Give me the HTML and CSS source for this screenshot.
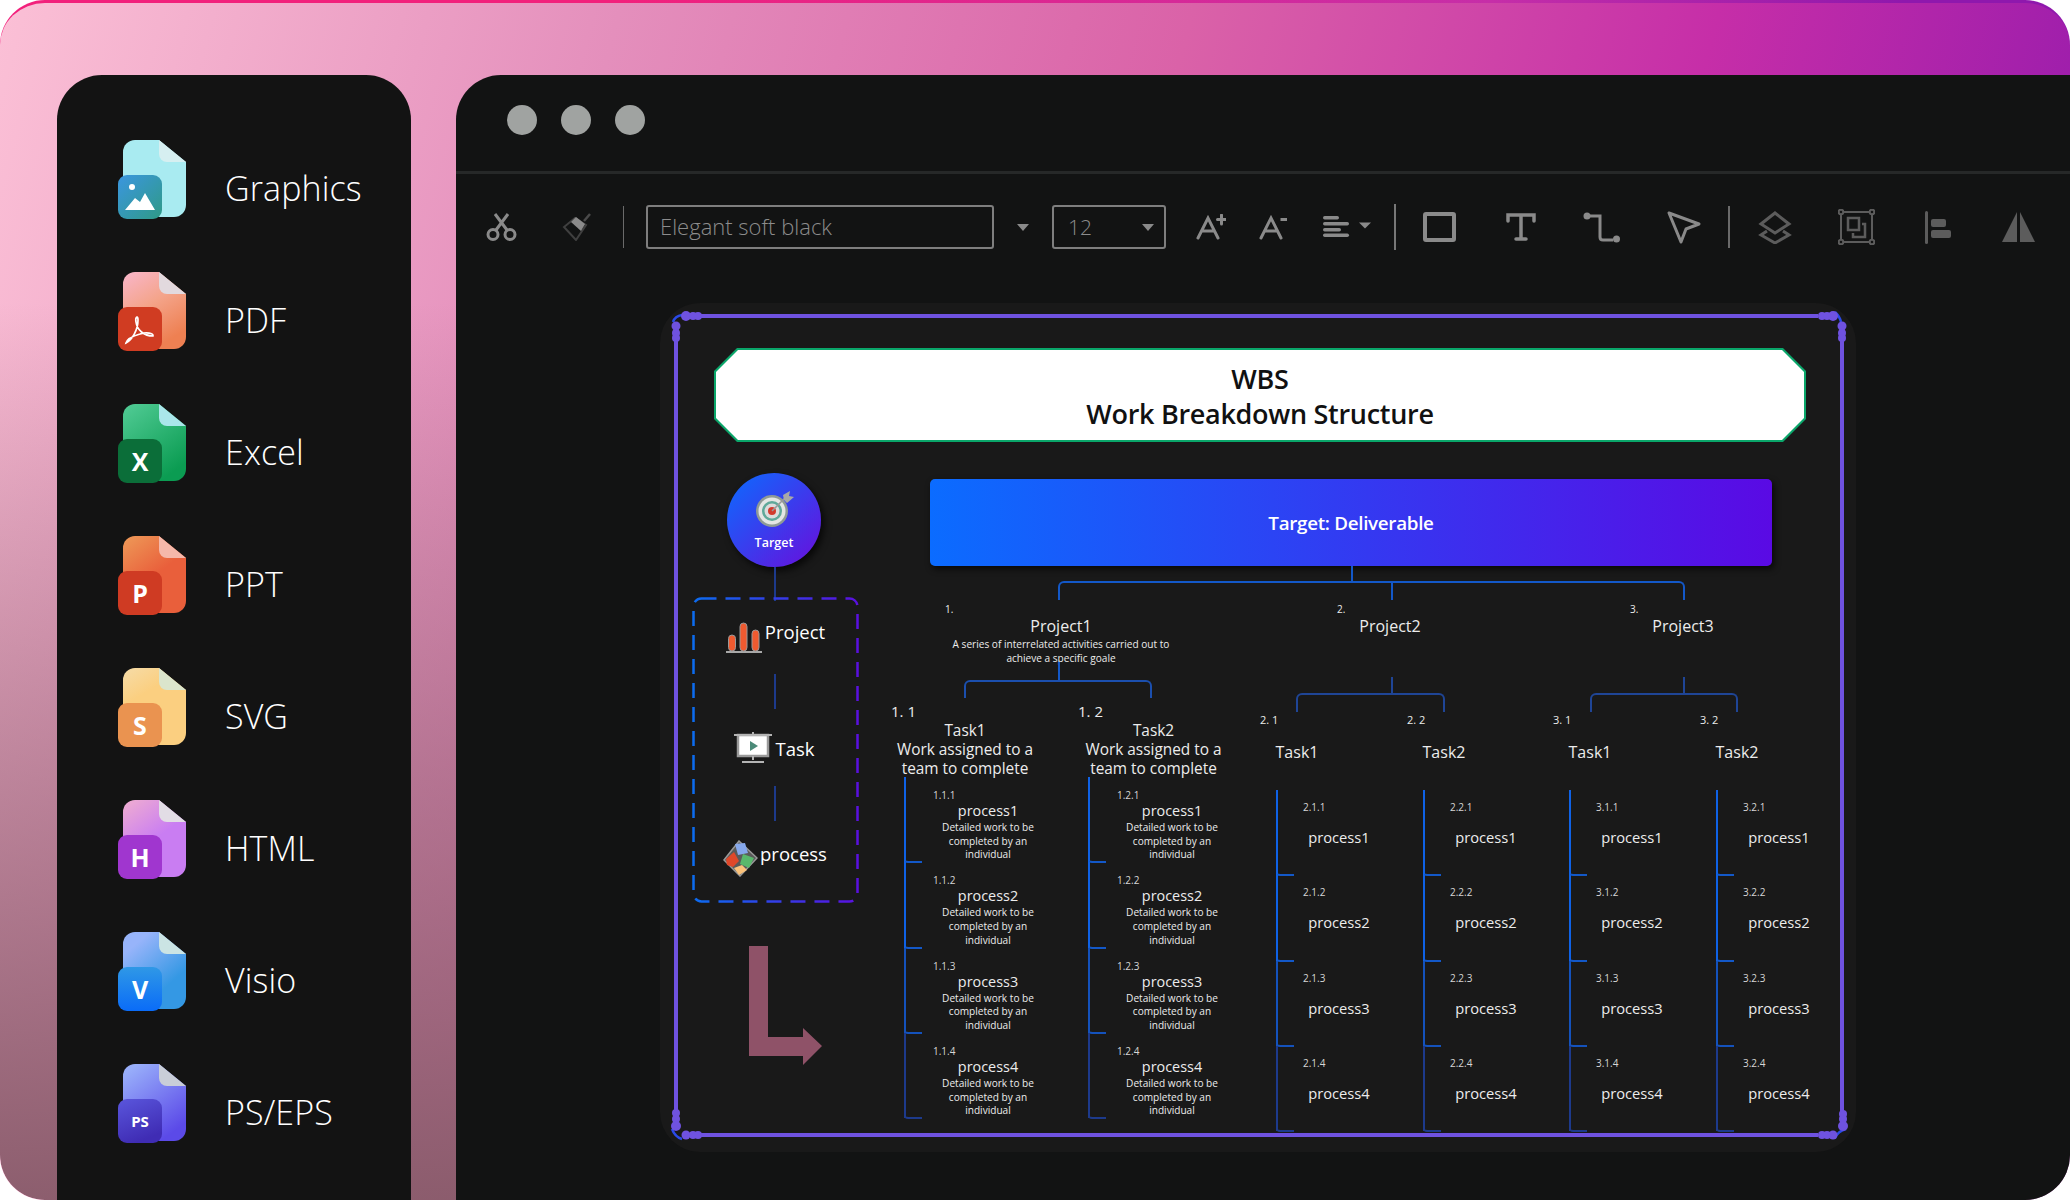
FILE: index.html
```html
<!DOCTYPE html>
<html lang="en">
<head>
    <meta charset="UTF-8">
    <title>Export formats</title>
    <link rel="stylesheet" href="styles.css">
</head>
<body>
    <!-- shared shapes for the file icons -->
    <svg class="defs" width="0" height="0">
        <defs>
            <path id="doc" d="M17 0H41L68 22V65A12 12 0 0 1 56 77H5V12A12 12 0 0 1 17 0Z"/>
            <path id="fold" d="M41 0L68 22H49A8 8 0 0 1 41 14Z"/>
            <linearGradient id="gGraphics" x1="0" y1="0" x2="1" y2="1"><stop offset="0" stop-color="#3b96e0"/><stop offset="1" stop-color="#2f9a86"/></linearGradient>
            <linearGradient id="bPdf" x1="0" y1="0" x2="0.5" y2="1"><stop offset="0" stop-color="#f9b6cb"/><stop offset="0.5" stop-color="#f4a48a"/><stop offset="1" stop-color="#ee8052"/></linearGradient>
            <linearGradient id="bExcel" x1="0" y1="0" x2="0.6" y2="1"><stop offset="0" stop-color="#52cc96"/><stop offset="1" stop-color="#0b9c52"/></linearGradient>
            <linearGradient id="bPpt" x1="0" y1="0" x2="0.6" y2="1"><stop offset="0" stop-color="#ee9a58"/><stop offset="0.6" stop-color="#e95f3b"/></linearGradient>
            <linearGradient id="bSvg" x1="0" y1="0" x2="0.5" y2="1"><stop offset="0" stop-color="#f6dca8"/><stop offset="0.4" stop-color="#fbcf80"/></linearGradient>
            <linearGradient id="bHtml" x1="0" y1="0" x2="0.6" y2="1"><stop offset="0" stop-color="#f0aed0"/><stop offset="0.6" stop-color="#c97df2"/></linearGradient>
            <linearGradient id="bVisio" x1="0" y1="0" x2="0.7" y2="1"><stop offset="0.2" stop-color="#97b4fa"/><stop offset="0.8" stop-color="#3498e4"/></linearGradient>
            <linearGradient id="bPs" x1="0" y1="0" x2="0.6" y2="1"><stop offset="0.1" stop-color="#98aefa"/><stop offset="1" stop-color="#5b4ae8"/></linearGradient>
            <linearGradient id="fVisio" x1="0" y1="0" x2="0" y2="1"><stop offset="0" stop-color="#2f98e6"/><stop offset="1" stop-color="#0a6cf8"/></linearGradient>
            <linearGradient id="fPs" x1="0" y1="0" x2="0.4" y2="1"><stop offset="0" stop-color="#5a56dc"/><stop offset="1" stop-color="#3f2cb4"/></linearGradient>
            <linearGradient id="dash" x1="0" y1="0" x2="1" y2="0"><stop offset="0" stop-color="#0c6cf0"/><stop offset="1" stop-color="#5a10e0"/></linearGradient>
        </defs>
    </svg>

    <div class="frame">
        <aside class="sidebar">
            <div class="file-item">
                <svg class="file-icon" viewBox="0 0 68 79"><use href="#doc" fill="#a9ebf1"/><use href="#fold" fill="#d6eff1"/><rect y="35" width="44" height="44" rx="9" fill="url(#gGraphics)"/><circle cx="14" cy="47" r="3" fill="#fff"/><path d="M7 70L17 58L22 62L27 53L37 70Z" fill="#fff"/></svg>
                <span class="file-label">Graphics</span>
            </div>
            <div class="file-item">
                <svg class="file-icon" viewBox="0 0 68 79"><use href="#doc" fill="url(#bPdf)"/><use href="#fold" fill="#e2d9de"/><rect y="35" width="44" height="44" rx="9" fill="#d03c22"/><path d="M8 71C14 68 20 58 20 48C20 43 17 45 18 50C19 58 26 64 35 64C36 61 28 60 22 62C15 64 9 67 8 71Z" fill="none" stroke="#fff" stroke-width="1.7"/></svg>
                <span class="file-label">PDF</span>
            </div>
            <div class="file-item">
                <svg class="file-icon" viewBox="0 0 68 79"><use href="#doc" fill="url(#bExcel)"/><use href="#fold" fill="#aae6ea"/><rect y="35" width="44" height="44" rx="9" fill="#0b6e39"/><text class="icon-letter" x="22" y="67">X</text></svg>
                <span class="file-label">Excel</span>
            </div>
            <div class="file-item">
                <svg class="file-icon" viewBox="0 0 68 79"><use href="#doc" fill="url(#bPpt)"/><use href="#fold" fill="#f5b8aa"/><rect y="35" width="44" height="44" rx="9" fill="#cf3b23"/><text class="icon-letter" x="22" y="67">P</text></svg>
                <span class="file-label">PPT</span>
            </div>
            <div class="file-item">
                <svg class="file-icon" viewBox="0 0 68 79"><use href="#doc" fill="url(#bSvg)"/><use href="#fold" fill="#dbe5cc"/><rect y="35" width="44" height="44" rx="9" fill="#ea9350"/><text class="icon-letter" x="22" y="67">S</text></svg>
                <span class="file-label">SVG</span>
            </div>
            <div class="file-item">
                <svg class="file-icon" viewBox="0 0 68 79"><use href="#doc" fill="url(#bHtml)"/><use href="#fold" fill="#e2dde5"/><rect y="35" width="44" height="44" rx="9" fill="#a036cf"/><text class="icon-letter" x="22" y="67">H</text></svg>
                <span class="file-label">HTML</span>
            </div>
            <div class="file-item">
                <svg class="file-icon" viewBox="0 0 68 79"><use href="#doc" fill="url(#bVisio)"/><use href="#fold" fill="#cbe4e4"/><rect y="35" width="44" height="44" rx="9" fill="url(#fVisio)"/><text class="icon-letter" x="22" y="67">V</text></svg>
                <span class="file-label">Visio</span>
            </div>
            <div class="file-item">
                <svg class="file-icon" viewBox="0 0 68 79"><use href="#doc" fill="url(#bPs)"/><use href="#fold" fill="#c9ced8"/><rect y="35" width="44" height="44" rx="9" fill="url(#fPs)"/><text class="icon-letter icon-letter-small" x="22" y="63">PS</text></svg>
                <span class="file-label">PS/EPS</span>
            </div>
        </aside>

        <main class="window">
            <div class="titlebar">
                <span class="dot"></span>
                <span class="dot"></span>
                <span class="dot"></span>
            </div>

            <div class="toolbar">
                <svg class="tool tool-cut" width="31" height="28" viewBox="0 0 31 28" fill="none" stroke="#8a8a8a" stroke-width="3"><circle cx="7" cy="21.5" r="5"/><circle cx="24" cy="21.5" r="5"/><path d="M10 17L22 1M21 17L9 1"/></svg>
                <svg class="tool tool-brush" width="30" height="28" viewBox="0 0 30 28" fill="none"><path d="M2 14L14 27L24 12L13 5Z" stroke="#3f3f3f" stroke-width="2"/><path d="M9 9L14 4L23 11L19 18Z" fill="#8a8a8a"/><path d="M22 8L28 1" stroke="#4a4a4a" stroke-width="2.5"/></svg>
                <span class="tool-sep sep-a"></span>
                <div class="font-box">Elegant soft black</div>
                <span class="caret caret-font"></span>
                <div class="size-box">12<span class="caret"></span></div>
                <svg class="tool tool-grow" width="30" height="26" viewBox="0 0 30 26" fill="none" stroke="#8a8a8a" stroke-width="3" stroke-linecap="round"><path d="M2 24L12 4L22 24M6 17H18"/><path d="M25.5 1V10M21.5 5.5H29.5"/></svg>
                <svg class="tool tool-shrink" width="29" height="26" viewBox="0 0 29 26" fill="none" stroke="#8a8a8a" stroke-width="3" stroke-linecap="round"><path d="M2 24L12 4L22 24M6 17H18"/><path d="M21.5 5.5H28" stroke-linecap="butt"/></svg>
                <svg class="tool tool-align" width="48" height="22" viewBox="0 0 48 22" fill="#8a8a8a"><rect y="0" width="16" height="3.5" rx="1.7"/><rect y="6" width="26" height="3.5" rx="1.7"/><rect y="12" width="18" height="3.5" rx="1.7"/><rect y="17.5" width="26" height="3.5" rx="1.7"/><path d="M36 6.5H48L42 12.5Z"/></svg>
                <span class="tool-sep tool-sep-wide sep-b"></span>
                <svg class="tool tool-rect" width="33" height="30" viewBox="0 0 33 30" fill="none" stroke="#8a8a8a" stroke-width="4"><rect x="2" y="2" width="29" height="26" rx="1"/></svg>
                <svg class="tool tool-text" width="30" height="28" viewBox="0 0 30 28" fill="none" stroke="#8a8a8a" stroke-width="3.5" stroke-linecap="round"><path d="M2 8V2H28V8M15 2V26M10 26H20"/></svg>
                <svg class="tool tool-link" width="37" height="31" viewBox="0 0 37 31" fill="none" stroke="#8a8a8a" stroke-width="3"><circle cx="4" cy="4" r="3.5" fill="#8a8a8a" stroke="none"/><circle cx="33.5" cy="27" r="3.5" fill="#8a8a8a" stroke="none"/><path d="M6 4H17V25Q17 28 20 28H30"/></svg>
                <svg class="tool tool-pointer" width="34" height="33" viewBox="0 0 34 33" fill="none" stroke="#8a8a8a" stroke-width="3" stroke-linejoin="round"><path d="M2 2L32 13L19 18L14 31Z"/></svg>
                <span class="tool-sep sep-c"></span>
                <svg class="tool tool-layers" width="34" height="33" viewBox="0 0 34 33" fill="none" stroke="#5c5c5c" stroke-width="3"><path d="M17 2L31 13L17 22L3 13Z"/><path d="M9 20L3 24L17 32L31 24L25 20"/></svg>
                <svg class="tool tool-group" width="37" height="36" viewBox="0 0 37 36" fill="none" stroke="#5c5c5c" stroke-width="2"><rect x="3" y="3" width="31" height="30"/><circle cx="3" cy="3" r="2.3" fill="#121313"/><circle cx="34" cy="3" r="2.3" fill="#121313"/><circle cx="3" cy="33" r="2.3" fill="#121313"/><circle cx="34" cy="33" r="2.3" fill="#121313"/><rect x="10" y="9" width="11" height="12" stroke-width="2.5"/><path d="M24 15H27V28H15V24" stroke-width="2.5"/></svg>
                <svg class="tool tool-left" width="26" height="33" viewBox="0 0 26 33" fill="#5c5c5c"><rect x="0" y="0" width="3" height="33" rx="1.5"/><rect x="6" y="8" width="15" height="8" rx="2"/><rect x="6" y="19" width="20" height="8" rx="2"/></svg>
                <svg class="tool tool-flip" width="33" height="30" viewBox="0 0 33 30" fill="#5c5c5c"><path d="M0 30L15 0V30Z"/><path d="M18 0L33 30H18Z"/></svg>
            </div>

            <div class="canvas">
                <div class="title-box">
                    <div class="title-inner">WBS<br>Work Breakdown Structure</div>
                </div>

                <div class="canvas-body">
                    <div class="legend">
                        <div class="target-circle">
                            <svg width="38" height="36" viewBox="0 0 38 36"><circle cx="16" cy="20" r="16" fill="#8f9a96"/><circle cx="16" cy="20" r="13.5" fill="#e4e6e4"/><circle cx="16" cy="20" r="10" fill="#5fa99a"/><circle cx="16" cy="20" r="7.5" fill="#dcdcdc"/><circle cx="16" cy="20" r="4" fill="#d23a2c"/><path d="M16 20L31 5" stroke="#9a9a9a" stroke-width="1.5"/><path d="M27 4L34 0L33 5L38 6L31 12L28 9Z" fill="#a8a8a8"/></svg>
                            <span>Target</span>
                        </div>
                        <div class="legend-stem"></div>
                        <div class="legend-box">
                            <svg class="legend-dash" width="167" height="306" viewBox="0 0 167 306"><rect x="1.5" y="1.5" width="164" height="303" rx="8" fill="none" stroke="url(#dash)" stroke-width="2.5" stroke-dasharray="15 9"/></svg>
                            <div class="legend-row legend-project">
                                <svg width="38" height="31" viewBox="0 0 38 31"><path d="M1 30H37" stroke="#a8a8a8" stroke-width="2"/><rect x="3.5" y="13" width="7" height="16" rx="3.5" fill="#ee5a30" stroke="#999"/><rect x="15" y="1" width="7" height="28" rx="3.5" fill="#ee5a30" stroke="#999"/><rect x="27" y="8" width="7" height="21" rx="3.5" fill="#ee5a30" stroke="#999"/></svg>
                                <span>Project</span>
                            </div>
                            <div class="legend-line legend-line-a"></div>
                            <div class="legend-row legend-task">
                                <svg width="38" height="32" viewBox="0 0 38 32"><rect x="4" y="3" width="30" height="21" fill="#fff" stroke="#9a9a9a" stroke-width="2.5"/><path d="M0 3H38M19 0V3M19 24V28M8 30H30" stroke="#b4b4b4" stroke-width="2"/><path d="M16 9L24 14L16 19Z" fill="#4b8a78"/></svg>
                                <span>Task</span>
                            </div>
                            <div class="legend-line legend-line-b"></div>
                            <div class="legend-row legend-process">
                                <svg width="35" height="37" viewBox="0 0 35 37"><path d="M16 1L34 18L17 36L1 20Z" fill="#5a5a5a" stroke="#999" stroke-width="1.5"/><path d="M12 4L22 3L25 13L15 15Z" fill="#86a8ec"/><path d="M3 19L11 12L16 21L10 27L4 25Z" fill="#e0482a"/><path d="M20 14L31 18L26 28L17 24Z" fill="#58b86c"/><path d="M11 28L19 25L24 30L16 35Z" fill="#fbc27a"/></svg>
                                <span>process</span>
                            </div>
                        </div>
                        <svg class="legend-arrow" width="74" height="120" viewBox="0 0 74 120"><path d="M0 0H19V91H54V82L73 100L54 119V110H0Z" fill="#8f5268"/></svg>
                    </div>

                    <div class="tree">
                        <div class="target-bar">Target: Deliverable</div>
                        <div class="bracket bracket-top"></div>

                        <div class="projects">
                            <section class="project project-wide">
                                <div class="project-head">
                                    <div class="project-num">1.</div>
                                    <div class="project-name">Project1</div>
                                    <div class="project-desc">A series of interrelated activities carried out to achieve a specific goale</div>
                                </div>
                                <div class="bracket bracket-one"></div>
                                <div class="tasks">
                                    <div class="task task-wide">
                                        <div class="task-num">1. 1</div>
                                        <div class="task-text">Task1<br>Work assigned to a<br>team to complete</div>
                                        <div class="proc-list">
                                            <div class="proc"><div class="proc-num">1.1.1</div><div class="proc-name">process1</div><div class="proc-desc">Detailed work to be completed by an individual</div></div>
                                            <div class="proc"><div class="proc-num">1.1.2</div><div class="proc-name">process2</div><div class="proc-desc">Detailed work to be completed by an individual</div></div>
                                            <div class="proc"><div class="proc-num">1.1.3</div><div class="proc-name">process3</div><div class="proc-desc">Detailed work to be completed by an individual</div></div>
                                            <div class="proc"><div class="proc-num">1.1.4</div><div class="proc-name">process4</div><div class="proc-desc">Detailed work to be completed by an individual</div></div>
                                        </div>
                                    </div>
                                    <div class="task task-wide task-second">
                                        <div class="task-num">1. 2</div>
                                        <div class="task-text">Task2<br>Work assigned to a<br>team to complete</div>
                                        <div class="proc-list">
                                            <div class="proc"><div class="proc-num">1.2.1</div><div class="proc-name">process1</div><div class="proc-desc">Detailed work to be completed by an individual</div></div>
                                            <div class="proc"><div class="proc-num">1.2.2</div><div class="proc-name">process2</div><div class="proc-desc">Detailed work to be completed by an individual</div></div>
                                            <div class="proc"><div class="proc-num">1.2.3</div><div class="proc-name">process3</div><div class="proc-desc">Detailed work to be completed by an individual</div></div>
                                            <div class="proc"><div class="proc-num">1.2.4</div><div class="proc-name">process4</div><div class="proc-desc">Detailed work to be completed by an individual</div></div>
                                        </div>
                                    </div>
                                </div>
                            </section>

                            <section class="project">
                                <div class="project-head">
                                    <div class="project-num">2.</div>
                                    <div class="project-name">Project2</div>
                                </div>
                                <div class="bracket bracket-two"></div>
                                <div class="tasks">
                                    <div class="task">
                                        <div class="task-num">2. 1</div>
                                        <div class="task-text">Task1</div>
                                        <div class="proc-list">
                                            <div class="proc"><div class="proc-num">2.1.1</div><div class="proc-name">process1</div></div>
                                            <div class="proc"><div class="proc-num">2.1.2</div><div class="proc-name">process2</div></div>
                                            <div class="proc"><div class="proc-num">2.1.3</div><div class="proc-name">process3</div></div>
                                            <div class="proc"><div class="proc-num">2.1.4</div><div class="proc-name">process4</div></div>
                                        </div>
                                    </div>
                                    <div class="task">
                                        <div class="task-num">2. 2</div>
                                        <div class="task-text">Task2</div>
                                        <div class="proc-list">
                                            <div class="proc"><div class="proc-num">2.2.1</div><div class="proc-name">process1</div></div>
                                            <div class="proc"><div class="proc-num">2.2.2</div><div class="proc-name">process2</div></div>
                                            <div class="proc"><div class="proc-num">2.2.3</div><div class="proc-name">process3</div></div>
                                            <div class="proc"><div class="proc-num">2.2.4</div><div class="proc-name">process4</div></div>
                                        </div>
                                    </div>
                                </div>
                            </section>

                            <section class="project">
                                <div class="project-head">
                                    <div class="project-num">3.</div>
                                    <div class="project-name">Project3</div>
                                </div>
                                <div class="bracket bracket-three"></div>
                                <div class="tasks">
                                    <div class="task">
                                        <div class="task-num">3. 1</div>
                                        <div class="task-text">Task1</div>
                                        <div class="proc-list">
                                            <div class="proc"><div class="proc-num">3.1.1</div><div class="proc-name">process1</div></div>
                                            <div class="proc"><div class="proc-num">3.1.2</div><div class="proc-name">process2</div></div>
                                            <div class="proc"><div class="proc-num">3.1.3</div><div class="proc-name">process3</div></div>
                                            <div class="proc"><div class="proc-num">3.1.4</div><div class="proc-name">process4</div></div>
                                        </div>
                                    </div>
                                    <div class="task">
                                        <div class="task-num">3. 2</div>
                                        <div class="task-text">Task2</div>
                                        <div class="proc-list">
                                            <div class="proc"><div class="proc-num">3.2.1</div><div class="proc-name">process1</div></div>
                                            <div class="proc"><div class="proc-num">3.2.2</div><div class="proc-name">process2</div></div>
                                            <div class="proc"><div class="proc-num">3.2.3</div><div class="proc-name">process3</div></div>
                                            <div class="proc"><div class="proc-num">3.2.4</div><div class="proc-name">process4</div></div>
                                        </div>
                                    </div>
                                </div>
                            </section>
                        </div>
                    </div>
                </div>

                <!-- selection outline over the page -->
                <svg class="selection" width="1196" height="849" viewBox="0 0 1196 849">
                    <path d="M40 13H1158M1182 36V812M40 832H1158M16 36V812" fill="none" stroke="#6f52e0" stroke-width="4"/>
                    <g fill="none" stroke="#2a4ae8" stroke-width="2.5"><path d="M13 19Q15 13 22 12"/><path d="M1175 9Q1180 14 1181 19"/><path d="M12 826Q15 834 22 836"/><path d="M1175 835Q1178 828 1186 826"/></g>
                    <g fill="#6f52e0">
                        <circle cx="26" cy="13" r="5"/><circle cx="33" cy="13" r="4"/><circle cx="38" cy="13" r="4"/>
                        <circle cx="16" cy="23" r="4.5"/><circle cx="16" cy="30" r="4"/><circle cx="16" cy="35" r="4"/>
                        <circle cx="1162" cy="13" r="4"/><circle cx="1167" cy="13" r="4"/><circle cx="1173" cy="13" r="5"/>
                        <circle cx="1182" cy="23" r="4.5"/><circle cx="1182" cy="30" r="4"/><circle cx="1182" cy="35" r="4"/>
                        <circle cx="16" cy="810" r="4"/><circle cx="16" cy="816" r="4"/><circle cx="16" cy="823" r="5"/>
                        <circle cx="26" cy="832" r="4.5"/><circle cx="33" cy="832" r="4"/><circle cx="38" cy="832" r="4"/>
                        <circle cx="1162" cy="832" r="4"/><circle cx="1167" cy="832" r="4"/><circle cx="1173" cy="832" r="4.5"/>
                        <circle cx="1183" cy="811" r="4"/><circle cx="1183" cy="816" r="4"/><circle cx="1183" cy="823" r="5"/>
                    </g>
                </svg>
            </div>
        </main>
    </div>
</body>
</html>
```
FILE: styles.css
```css
* {
    box-sizing: border-box;
    margin: 0;
    padding: 0;
}

body {
    background: #fff;
    font-family: "Open Sans", "Noto Sans", sans-serif;
    color: #fff;
}

.defs {
    position: absolute;
}

.frame {
    width: 2070px;
    height: 1200px;
    display: flex;
    gap: 45px;
    padding: 72px 0 0 57px;
    overflow: hidden;
    border-radius: 45px;
    border-top: 3px solid transparent;
    background:
        linear-gradient(180deg, rgba(135, 90, 105, 0) 25%, rgba(135, 90, 105, 0.95) 100%) padding-box,
        linear-gradient(105deg, #fbc0d6 0%, #e48fbc 26%, #da62a8 50%, #c62ea8 72%, #8f18ad 94%) padding-box,
        linear-gradient(90deg, #f2207c 0%, #f2207c 30%, #c62ea8 72%, #8f18ad 92%) border-box;
}

/* left column */
.sidebar {
    width: 354px;
    flex-shrink: 0;
    padding: 65px 0 0 61px;
    background: #131313;
    border-radius: 45px 45px 0 0;
    display: flex;
    flex-direction: column;
    gap: 53px;
}

.file-item {
    display: flex;
    align-items: center;
    gap: 39px;
    height: 79px;
}

.file-icon {
    width: 68px;
    height: 79px;
    flex-shrink: 0;
}

.file-label {
    padding-top: 17px;
    font-size: 34px;
    font-weight: 300;
    letter-spacing: 0.1px;
}

.icon-letter {
    fill: #fff;
    font-family: "Open Sans", sans-serif;
    font-size: 25px;
    font-weight: 700;
    text-anchor: middle;
}

.icon-letter-small {
    font-size: 15px;
}

/* app window */
.window {
    flex: 1;
    background: #121313;
    border-radius: 45px 0 0 0;
}

.titlebar {
    height: 99px;
    padding: 30px 0 0 51px;
    display: flex;
    gap: 24px;
    border-bottom: 3px solid #262828;
}

.dot {
    width: 30px;
    height: 30px;
    border-radius: 50%;
    background: #a0a3a1;
}

.toolbar {
    height: 106px;
    display: flex;
    align-items: center;
    padding-left: 30px;
}

.tool {
    flex-shrink: 0;
}

.tool-brush { margin-left: 45px; }
.tool-grow { margin-left: 30px; }
.tool-shrink { margin-left: 33px; }
.tool-align { margin-left: 35px; }
.tool-rect { margin-left: 27px; }
.tool-text { margin-left: 50px; }
.tool-link { margin-left: 47px; }
.tool-pointer { margin-left: 47px; }
.tool-layers { margin-left: 28px; }
.tool-group { margin-left: 46px; }
.tool-left { margin-left: 50px; }
.tool-flip { margin-left: 51px; }

.tool-sep {
    width: 1px;
    height: 42px;
    background: #6a6a6a;
    flex-shrink: 0;
}

.tool-sep-wide {
    width: 2px;
    height: 46px;
    background: #777;
}

.sep-a { margin-left: 31px; }
.sep-b { margin-left: 23px; }
.sep-c { margin-left: 27px; width: 2px; }

.font-box {
    width: 348px;
    height: 44px;
    margin-left: 22px;
    padding-left: 12px;
    border: 2px solid #7e7e7e;
    border-radius: 3px;
    color: #8c8c8c;
    font-size: 22px;
    font-weight: 300;
    line-height: 38px;
}

.caret {
    width: 0;
    height: 0;
    border-left: 6px solid transparent;
    border-right: 6px solid transparent;
    border-top: 7px solid #8a8a8a;
}

.caret-font {
    margin-left: 23px;
}

.size-box {
    width: 114px;
    height: 44px;
    margin-left: 23px;
    padding: 0 10px 0 14px;
    border: 2px solid #7e7e7e;
    border-radius: 3px;
    color: #8c8c8c;
    font-size: 21px;
    font-weight: 300;
    line-height: 40px;
    display: flex;
    align-items: center;
    justify-content: space-between;
}

/* the drawing */
.canvas {
    position: relative;
    width: 1196px;
    height: 849px;
    margin: 23px 0 0 204px;
    padding: 45px 0 0 33px;
    background: #191919;
    border-radius: 40px;
}

.selection {
    position: absolute;
    left: 0;
    top: 0;
    pointer-events: none;
}

.title-box {
    width: 1092px;
    height: 94px;
    margin-left: 21px;
    padding: 2px;
    background: #0aa66a;
    clip-path: polygon(23px 0, calc(100% - 23px) 0, 100% 23px, 100% calc(100% - 23px), calc(100% - 23px) 100%, 23px 100%, 0 calc(100% - 23px), 0 23px);
}

.title-inner {
    height: 90px;
    padding-top: 11px;
    background: #fff;
    color: #111;
    text-align: center;
    font-size: 27px;
    font-weight: 600;
    line-height: 35px;
    letter-spacing: -0.3px;
    clip-path: polygon(22px 0, calc(100% - 22px) 0, 100% 22px, 100% calc(100% - 22px), calc(100% - 22px) 100%, 22px 100%, 0 calc(100% - 22px), 0 22px);
}

.canvas-body {
    display: flex;
}

.legend {
    width: 164px;
    flex-shrink: 0;
}

.target-circle {
    width: 94px;
    height: 94px;
    margin: 31px 0 0 34px;
    padding-top: 18px;
    border-radius: 50%;
    background: linear-gradient(135deg, #0a6cff, #6a0ddc);
    box-shadow: 3px 4px 7px rgba(0, 0, 0, 0.7);
    display: flex;
    flex-direction: column;
    align-items: center;
    font-size: 12.5px;
    font-weight: 600;
    line-height: 16px;
}

.target-circle svg {
    margin-left: 2px;
    flex-shrink: 0;
}

.target-circle span {
    margin-top: 8px;
}

.legend-stem {
    width: 2px;
    height: 34px;
    margin: 0 0 -4px 81px;
    background: #1d3a8c;
}

.legend-box {
    position: relative;
    width: 166px;
    height: 306px;
    padding-top: 25px;
}

.legend-dash {
    position: absolute;
    left: -1px;
    top: 0;
}

.legend-row {
    display: flex;
    justify-content: center;
    gap: 2px;
    font-size: 18.5px;
    line-height: 24px;
}

.legend-row svg {
    flex-shrink: 0;
}

.legend-project { height: 31px; margin-left: -2px; }
.legend-project span { margin-top: -2px; }
.legend-task { height: 32px; margin-top: 23px; margin-left: -3px; }
.legend-task span { margin-top: 5px; margin-left: 1px; }
.legend-process { height: 37px; margin-top: 19px; margin-left: -2px; }
.legend-process span { margin-top: 2px; }

.legend-line {
    width: 2px;
    height: 35px;
    margin-left: 81px;
    background: #1d3a8c;
}

.legend-line-a { margin-top: 21px; }
.legend-line-b { margin-top: 22px; }

.legend-arrow {
    display: block;
    margin: 43px 0 0 56px;
}

.tree {
    width: 960px;
    margin-left: 34px;
}

.target-bar {
    width: 842px;
    height: 87px;
    margin: 37px 0 0 39px;
    border-radius: 5px;
    background: linear-gradient(90deg, #0b6cff, #5a0ae4);
    box-shadow: 2px 3px 6px rgba(0, 0, 0, 0.7);
    font-size: 18.8px;
    font-weight: 600;
    line-height: 89px;
    text-align: center;
    letter-spacing: -0.3px;
}

/* connectors: open box, stems hang on it */
.bracket {
    position: relative;
    border: 2px solid #1358c8;
    border-bottom: none;
    border-radius: 6px 6px 0 0;
}

.bracket::before {
    content: "";
    position: absolute;
    width: 2px;
    background: #1358c8;
}

.bracket-top {
    width: 627px;
    height: 19px;
    margin: 15px 0 0 167px;
}

.bracket-top::before {
    left: 291px;
    top: -17px;
    height: 15px;
}

.bracket-top::after {
    content: "";
    position: absolute;
    left: 331px;
    top: 0;
    width: 2px;
    height: 17px;
    background: #1358c8;
}

.bracket-one {
    width: 188px;
    height: 18px;
    margin: 18px 0 0 73px;
    border-color: #1b4fae;
}

.bracket-one::before {
    left: 92px;
    top: -20px;
    height: 18px;
}

.bracket-two,
.bracket-three {
    height: 19px;
    margin-top: 16px;
    border-color: #1f4596;
}

.bracket-two {
    width: 149px;
    margin-left: 36px;
}

.bracket-two::before {
    left: 93px;
    top: -18px;
    height: 16px;
    background: #1f4596;
}

.bracket-three {
    width: 148px;
    margin-left: 37px;
}

.bracket-three::before {
    left: 91px;
    top: -18px;
    height: 16px;
    background: #1f4596;
}

.projects {
    display: flex;
    margin-top: 2px;
    color: #ececec;
}

.project {
    width: 293px;
    flex-shrink: 0;
}

.project-wide {
    width: 369px;
}

.project-head {
    height: 75px;
    text-align: center;
}

.project-wide .project-head {
    height: 60px;
    width: 340px;
}

.project-num {
    height: 14px;
    padding-left: 77px;
    font-size: 10px;
    line-height: 14px;
    text-align: left;
}

.project-wide .project-num {
    padding-left: 54px;
}

.project-name {
    width: 260px;
    font-size: 16px;
    line-height: 20px;
}

.project-wide .project-name {
    width: 340px;
}

.project-desc {
    width: 240px;
    margin: 1px auto 0;
    font-size: 10.1px;
    line-height: 14px;
}

.tasks {
    display: flex;
}

.task {
    width: 147px;
    flex-shrink: 0;
}

.task-wide {
    width: 187px;
}

.task-second {
    width: 182px;
}

.task-num {
    height: 14px;
    margin-top: 1px;
    font-size: 11px;
    line-height: 14px;
}

.task-text {
    width: 74px;
    margin-top: 15px;
    font-size: 16px;
    line-height: 20px;
    text-align: center;
}

.proc-list {
    margin: 28px 0 0 16px;
}

.proc {
    position: relative;
    height: 85.33px;
    padding-top: 10px;
    border-left: 2px solid #0f62e6;
}

.proc::after {
    content: "";
    position: absolute;
    left: -2px;
    bottom: -1px;
    width: 16px;
    height: 6px;
    border-left: 2px solid transparent;
    border-bottom: 2px solid #1358c8;
    border-bottom-left-radius: 4px;
}

.proc:nth-child(3) {
    border-left-color: #1452bc;
}

.proc:nth-child(3)::after {
    border-bottom-color: #1452bc;
}

.proc:nth-child(4) {
    border-left-color: #1d3a8c;
}

.proc:nth-child(4)::after {
    border-bottom-color: #1d3a8c;
}

.proc-num {
    height: 14px;
    padding-left: 25px;
    font-size: 10px;
    line-height: 14px;
    color: #d6d6d6;
}

.proc-name {
    width: 68px;
    margin: 13px 0 0 27px;
    font-size: 14.7px;
    line-height: 20px;
    text-align: center;
    white-space: nowrap;
}

/* first project has longer task and process text */
.task-wide .task-num {
    height: 19.5px;
    margin-top: 3px;
    font-size: 15px;
    line-height: 20px;
}

.task-wide .task-text {
    width: 148px;
    margin-top: 0;
    font-size: 15.4px;
    line-height: 19px;
}

.task-second .task-text {
    margin-left: 1.5px;
}

.task-wide .proc-list {
    margin: -0.5px 0 0 13px;
}

.task-second .proc-list {
    margin-left: 10px;
}

.task-wide .proc {
    padding-top: 11px;
}

.task-wide .proc-num {
    padding-left: 27px;
}

.task-wide .proc-name {
    width: 108px;
    margin: -1px 0 0 28px;
    font-size: 14.4px;
}

.proc-desc {
    width: 108px;
    margin: 0 0 0 28px;
    font-size: 10.1px;
    line-height: 13.7px;
    text-align: center;
}
```
